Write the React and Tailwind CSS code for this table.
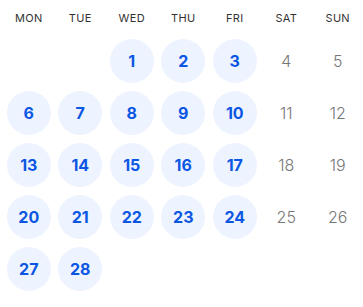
const days = ['MON', 'TUE', 'WED', 'THU', 'FRI', 'SAT', 'SUN'];

// February: starts on Wednesday, 28 days
const cells = [null, null, ...Array.from({ length: 28 }, (_, i) => i + 1)];

const isWeekend = (index) => index % 7 === 5 || index % 7 === 6;

export default function App() {
  return (
    <div className="w-[363px] h-[307px] bg-white pl-[3px] font-['Inter',sans-serif]">
      <div className="grid grid-cols-[repeat(7,51.5px)] h-[35px] items-center">
        {days.map((day) => (
          <div key={day} className="text-center text-[11px] text-[#333] tracking-[0.3px] pt-[1px]">
            {day}
          </div>
        ))}
      </div>
      <div className="grid grid-cols-[repeat(7,51.5px)] auto-rows-[52px]">
        {cells.map((day, index) => (
          <div key={index} className="flex items-center justify-center">
            {day && (isWeekend(index) ? (
              <span className="text-[16px] font-light text-[#777]">{day}</span>
            ) : (
              <span className="w-11 h-11 rounded-full bg-[#edf3ff] flex items-center justify-center text-[16px] font-bold text-[#0b57e3]">
                {day}
              </span>
            ))}
          </div>
        ))}
      </div>
    </div>
  );
}
